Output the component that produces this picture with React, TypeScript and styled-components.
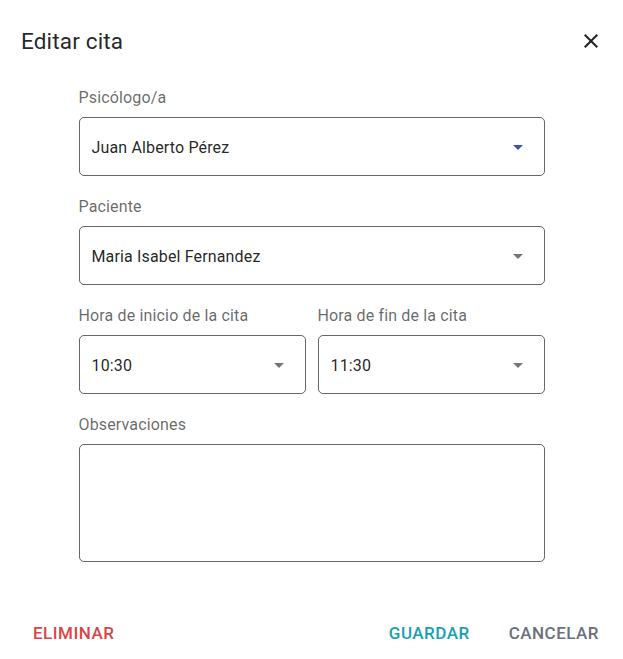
import styled, { createGlobalStyle } from 'styled-components';

const GlobalStyle = createGlobalStyle`
  html, body {
    margin: 0;
    padding: 0;
    background: #ffffff;
    font-family: Roboto, "Liberation Sans", sans-serif;
  }
`;

type Option = { value: string; active?: boolean };

function Select({ value, active }: Option) {
  return (
    <SelectBox>
      <SelectValue>{value}</SelectValue>
      <Arrow $active={active} viewBox="0 0 24 24" aria-hidden="true">
        <path d="M7 10l5 5 5-5z" />
      </Arrow>
    </SelectBox>
  );
}

export default function App() {
  return (
    <>
      <GlobalStyle />
      <Dialog>
        <Header>
          <Title>Editar cita</Title>
          <CloseButton aria-label="Cerrar">
            <svg viewBox="0 0 24 24" width="24" height="24">
              <path
                fill="currentColor"
                d="M19 6.41 17.59 5 12 10.59 6.41 5 5 6.41 10.59 12 5 17.59 6.41 19 12 13.41 17.59 19 19 17.59 13.41 12z"
              />
            </svg>
          </CloseButton>
        </Header>

        <Form>
          <Field>
            <Label>Psicólogo/a</Label>
            <Select value="Juan Alberto Pérez" active />
          </Field>
          <Field>
            <Label>Paciente</Label>
            <Select value="Maria Isabel Fernandez" />
          </Field>
          <TimeRow>
            <Field>
              <Label>Hora de inicio de la cita</Label>
              <Select value="10:30" />
            </Field>
            <Field>
              <Label>Hora de fin de la cita</Label>
              <Select value="11:30" />
            </Field>
          </TimeRow>
          <Field>
            <Label>Observaciones</Label>
            <TextArea />
          </Field>
        </Form>

        <Actions>
          <TextButton $color="#d94545">Eliminar</TextButton>
          <Spacer />
          <TextButton $color="#179fb7">Guardar</TextButton>
          <TextButton $color="#6b6f7c">Cancelar</TextButton>
        </Actions>
      </Dialog>
    </>
  );
}

const Dialog = styled.div`
  width: 623px;
  height: 659px;
  display: flex;
  flex-direction: column;
  box-sizing: border-box;
`;

const Header = styled.div`
  display: flex;
  align-items: center;
  justify-content: space-between;
  padding: 25px 20px 0 21px;
  height: 32px;
`;

const Title = styled.h2`
  margin: 0;
  font-size: 22.5px;
  font-weight: 400;
  line-height: 32px;
  letter-spacing: 0.0075em;
  color: rgba(0, 0, 0, 0.87);
`;

const CloseButton = styled.button`
  border: none;
  background: none;
  padding: 0;
  width: 24px;
  height: 24px;
  color: rgba(0, 0, 0, 0.87);
  cursor: pointer;
`;

const Form = styled.div`
  width: 466px;
  margin: 29px auto 0;
  display: flex;
  flex-direction: column;
  gap: 19px;
`;

const Field = styled.div`
  display: flex;
  flex-direction: column;
  flex: 1;
  min-width: 0;
`;

const Label = styled.label`
  font-size: 16px;
  line-height: 20px;
  letter-spacing: 0.00938em;
  color: rgba(0, 0, 0, 0.6);
  margin: 2px 0 9px;
`;

const SelectBox = styled.div`
  height: 59px;
  box-sizing: border-box;
  border: 1px solid rgba(0, 0, 0, 0.6);
  border-radius: 5px;
  display: flex;
  align-items: center;
  padding: 1px 14px 0 12px;
`;

const SelectValue = styled.span`
  flex: 1;
  font-size: 16px;
  letter-spacing: 0.00938em;
  color: rgba(0, 0, 0, 0.87);
`;

const Arrow = styled.svg<{ $active?: boolean }>`
  width: 24px;
  height: 24px;
  fill: ${(p) => (p.$active ? '#3f51b5' : 'rgba(0, 0, 0, 0.54)')};
`;

const TimeRow = styled.div`
  display: flex;
  gap: 12px;
`;

const TextArea = styled.div`
  height: 118px;
  box-sizing: border-box;
  border: 1px solid rgba(0, 0, 0, 0.6);
  border-radius: 5px;
`;

const Actions = styled.div`
  margin-top: auto;
  display: flex;
  align-items: center;
  gap: 23px;
  padding: 0 16px 5px 25px;
`;

const Spacer = styled.div`
  flex: 1;
`;

const TextButton = styled.button<{ $color: string }>`
  border: none;
  background: none;
  padding: 6px 8px;
  font-family: Roboto, "Liberation Sans", sans-serif;
  font-size: 17px;
  font-weight: 500;
  line-height: 30px;
  letter-spacing: 0.02857em;
  text-transform: uppercase;
  color: ${(p) => p.$color};
  cursor: pointer;
`;
